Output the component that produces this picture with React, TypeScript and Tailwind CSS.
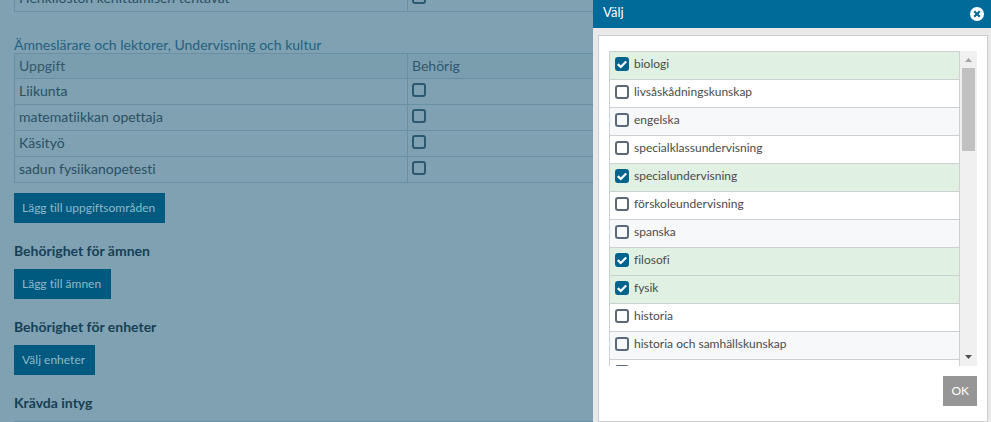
import { useState } from "react";

type Subject = { name: string; checked: boolean };

const tasks = ["Liikunta", "matematiikkan opettaja", "Käsityö", "sadun fysiikanopetesti"];

const initialSubjects: Subject[] = [
  { name: "biologi", checked: true },
  { name: "livsåskådningskunskap", checked: false },
  { name: "engelska", checked: false },
  { name: "specialklassundervisning", checked: false },
  { name: "specialundervisning", checked: true },
  { name: "förskoleundervisning", checked: false },
  { name: "spanska", checked: false },
  { name: "filosofi", checked: true },
  { name: "fysik", checked: true },
  { name: "historia", checked: false },
  { name: "historia och samhällskunskap", checked: false },
  { name: "", checked: false },
];

function TaskRow({ name }: { name: string }) {
  return (
    <tr className="h-[26px]">
      <td className="w-[393px] border border-[#688fa2] px-1 pb-0.5">{name}</td>
      <td className="border border-[#688fa2] px-1">
        <input
          type="checkbox"
          aria-label={name}
          className="mb-1 block size-[14px] appearance-none rounded-[3px] border-2 border-[#2c5870] checked:bg-[#2c5870]"
        />
      </td>
    </tr>
  );
}

function Section({ title, action }: { title: string; action: string }) {
  return (
    <section className="mt-5">
      <h3 className="text-sm/4 font-bold text-[#173f54]">{title}</h3>
      <ActionButton label={action} />
    </section>
  );
}

function ActionButton({ label }: { label: string }) {
  return (
    <button type="button" className="mt-[10px] block h-[30px] bg-[#005a80] pr-[10px] pl-2 text-[12px]/4 text-[#8fb9cb]">
      {label}
    </button>
  );
}

function SubjectRow({ subject, onToggle }: { subject: Subject; onToggle: () => void }) {
  return (
    <tr className={subject.checked ? "h-7 bg-[#e0f0e2]" : "h-7 bg-white odd:bg-[#f7f8fa]"}>
      <td className="border border-[#cbd0d0] px-[5px] align-top">
        <label className="flex h-[26px] items-start gap-[5px] pt-[5px]">
          <span className="grid">
            <input
              type="checkbox"
              checked={subject.checked}
              onChange={onToggle}
              className="col-start-1 row-start-1 size-[14px] appearance-none rounded-[3px] border-2 border-[#5b6878] checked:border-[#00638c] checked:bg-[#00638c]"
            />
            {subject.checked && (
              <svg viewBox="0 0 14 14" className="pointer-events-none col-start-1 row-start-1 size-[14px]" aria-hidden="true">
                <path d="M2.8 7.2 5.7 10 11.2 4.5" fill="none" stroke="#fff" strokeWidth="2.3" />
              </svg>
            )}
          </span>
          <span className="text-[12px]/[14px]">{subject.name}</span>
        </label>
      </td>
    </tr>
  );
}

export default function App() {
  const [subjects, setSubjects] = useState(initialSubjects);

  const toggle = (index: number) =>
    setSubjects(subjects.map((s, i) => (i === index ? { ...s, checked: !s.checked } : s)));

  return (
    <div className="relative h-screen overflow-hidden bg-[#7fa1b1] font-[Lato,'Open_Sans',sans-serif] [font-variant-ligatures:no-common-ligatures]">
      <main className="px-[14px] text-sm/5 text-[#2b5064]">
        <table className="-mt-[15px] w-full border-collapse">
          <tbody>
            <TaskRow name="Henkilöstön kehittämisen tehtävät" />
          </tbody>
        </table>

        <table className="mt-[23px] w-full border-collapse">
          <caption className="h-[18px] text-left text-sm/5 text-[#1f6282]">
            Ämneslärare och lektorer, Undervisning och kultur
          </caption>
          <thead>
            <tr className="h-[25px] bg-[#7b9eaf] text-left text-[#31586c]">
              <th className="w-[393px] border border-[#688fa2] px-1 font-normal">Uppgift</th>
              <th className="border border-[#688fa2] px-1 font-normal">Behörig</th>
            </tr>
          </thead>
          <tbody>
            {tasks.map((task) => (
              <TaskRow key={task} name={task} />
            ))}
          </tbody>
        </table>
        <ActionButton label="Lägg till uppgiftsområden" />

        <Section title="Behörighet för ämnen" action="Lägg till ämnen" />
        <Section title="Behörighet för enheter" action="Välj enheter" />
        <h3 className="mt-5 border-b border-[#688fa2] pb-[10px] text-sm/4 font-bold text-[#173f54]">Krävda intyg</h3>
      </main>

      <aside
        role="dialog"
        aria-label="Välj"
        className="absolute inset-y-0 right-0 flex w-[398px] flex-col bg-[#e9e9e9] text-[#4b4b4b]"
      >
        <header className="flex h-7 shrink-0 items-center justify-between bg-[#006b99] pr-[7px] pl-[10px]">
          <h2 className="pb-1 text-[13px]/5 text-white">Välj</h2>
          <button type="button" aria-label="Stäng">
            <svg viewBox="0 0 14 14" className="size-[14px]" aria-hidden="true">
              <circle cx="7" cy="7" r="7" fill="#fff" />
              <path d="m4.2 4.2 5.6 5.6M9.8 4.2 4.2 9.8" stroke="#006b99" strokeWidth="2.1" />
            </svg>
          </button>
        </header>

        <div className="mt-[7px] mr-[3px] ml-[5px] flex min-h-0 flex-1 flex-col border border-[#cdcdcd] bg-white pt-[15px] pr-[10px] pb-[15px] pl-[10px]">
          <div className="flex min-h-0 flex-1">
            <div className="min-w-0 flex-1 overflow-y-auto [scrollbar-width:none]">
              <table className="w-full border-collapse">
                <tbody>
                  {subjects.map((subject, index) => (
                    <SubjectRow key={index} subject={subject} onToggle={() => toggle(index)} />
                  ))}
                </tbody>
              </table>
            </div>
            <div className="flex w-[17px] flex-col items-center bg-[#f0f0f0]" aria-hidden="true">
              <svg viewBox="0 0 17 17" className="size-[17px]">
                <path d="M5 11 8.5 7 12 11z" fill="#a3a3a3" />
              </svg>
              <div className="flex w-[13px] flex-1 flex-col">
                <div className="h-[83px] bg-[#c1c1c1]" />
              </div>
              <svg viewBox="0 0 17 17" className="size-[17px]">
                <path d="M5 6 8.5 10 12 6z" fill="#505050" />
              </svg>
            </div>
          </div>
          <div className="mt-[10px] flex justify-end">
            <button type="button" className="h-[30px] bg-[#969696] px-2 text-[12px]/4 text-white">
              OK
            </button>
          </div>
        </div>
      </aside>
    </div>
  );
}
